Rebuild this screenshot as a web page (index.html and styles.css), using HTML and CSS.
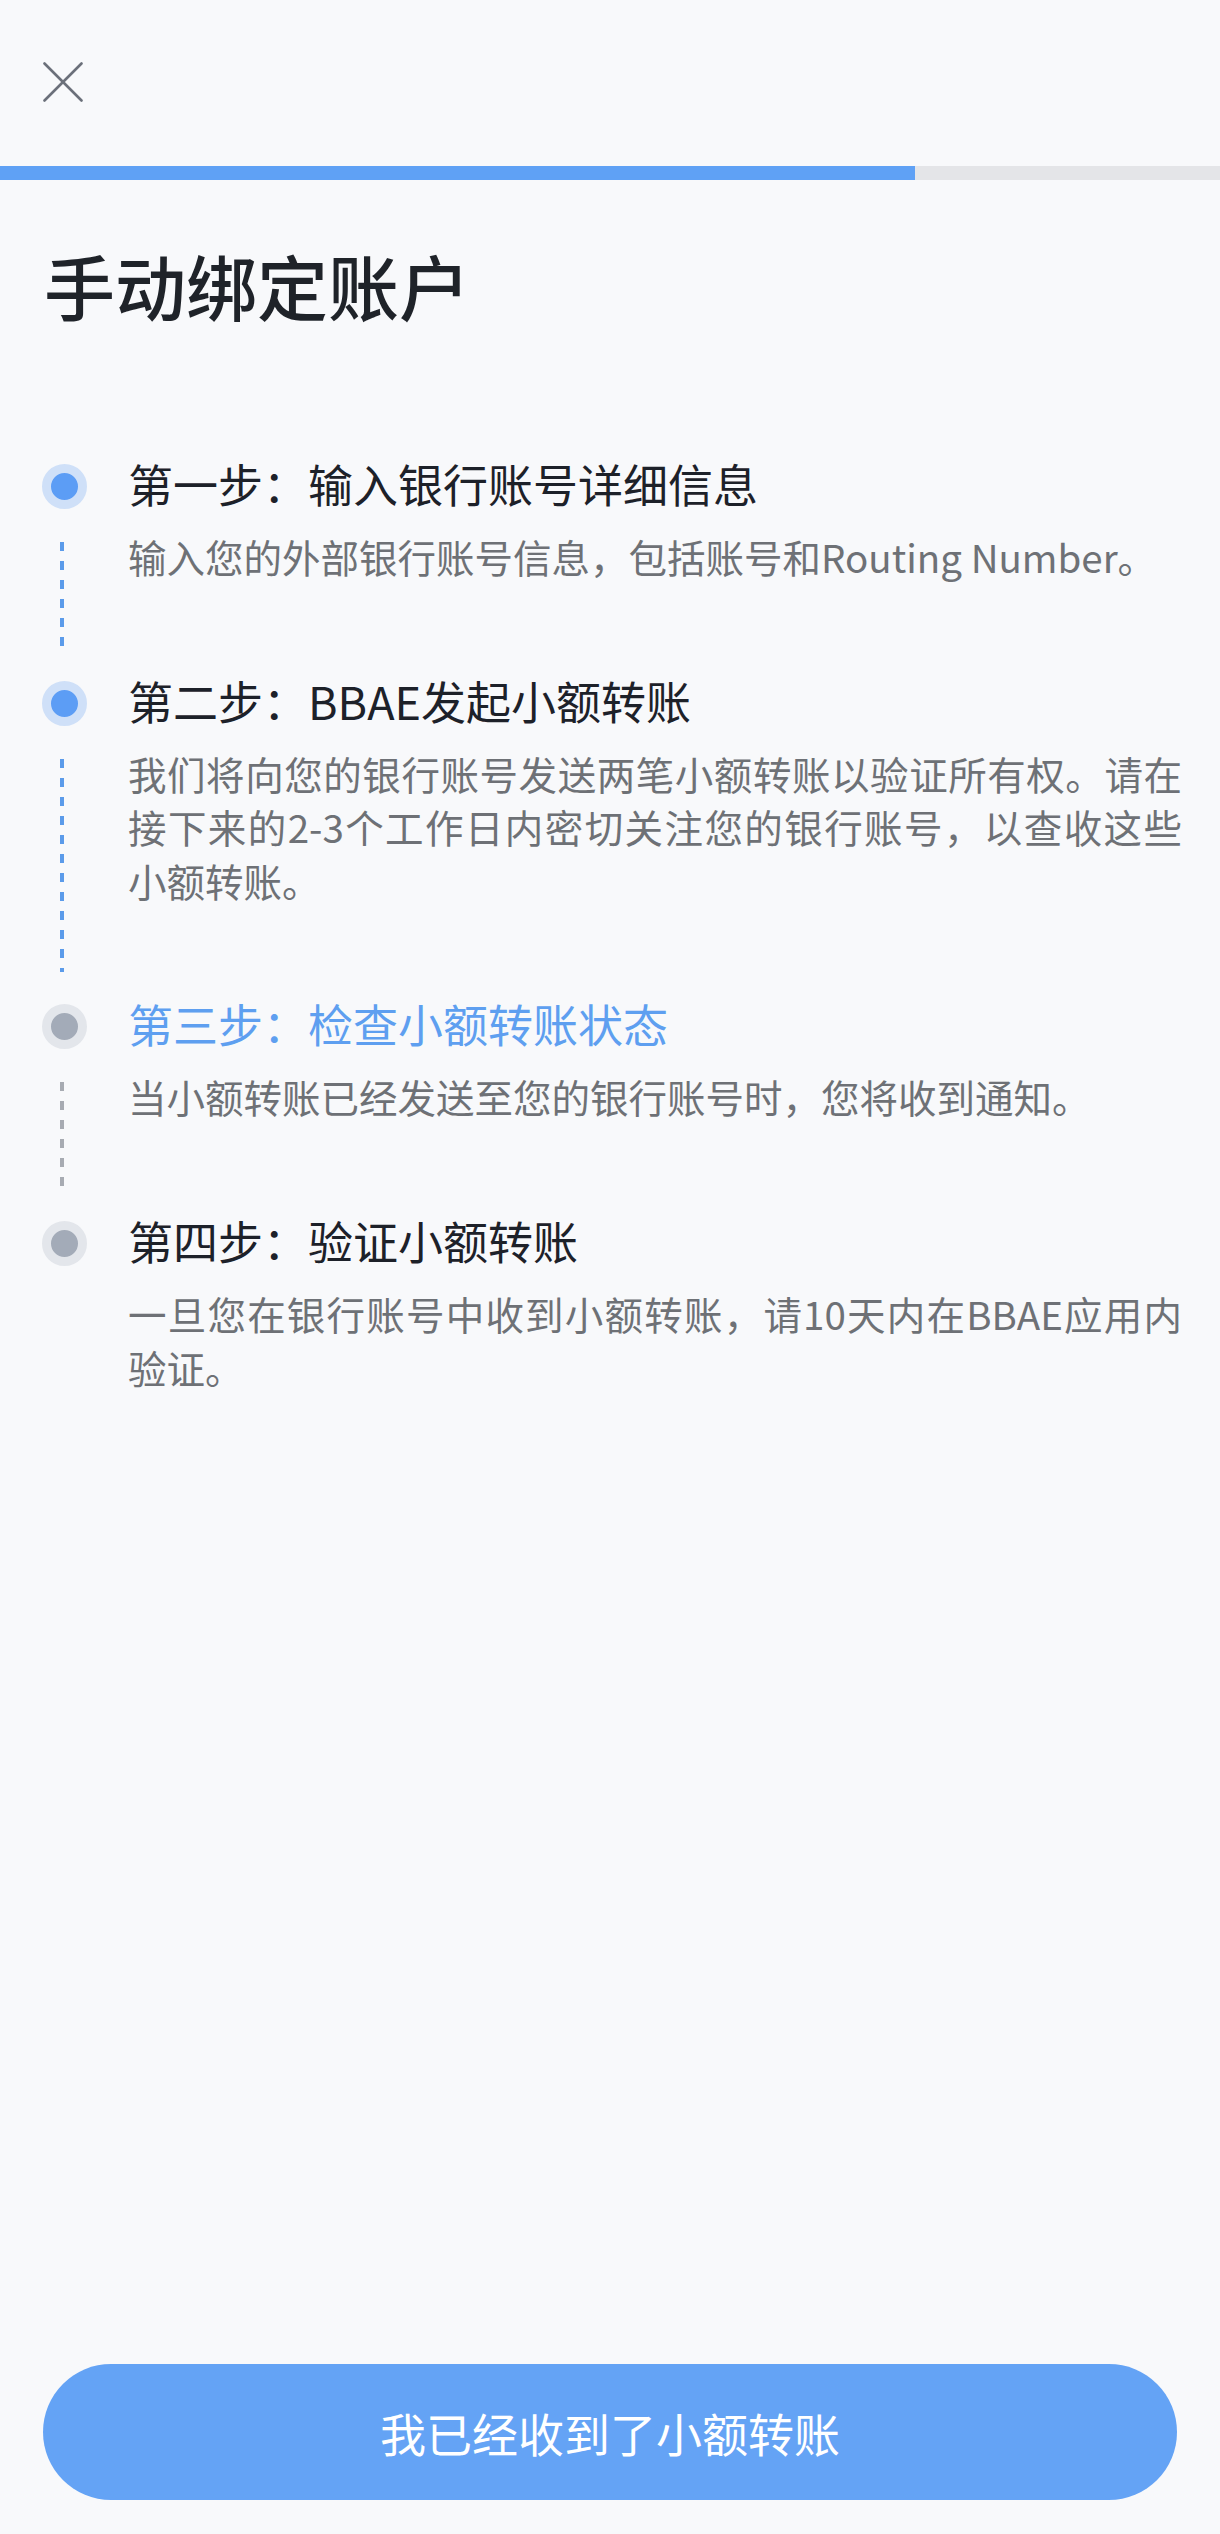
FILE: index.html
```html
<!DOCTYPE html>
<html lang="zh-CN">
<head>
    <meta charset="UTF-8">
    <meta name="viewport" content="width=device-width, initial-scale=1.0">
    <title>手动绑定账户</title>
    <link rel="stylesheet" href="styles.css">
</head>
<body>

    <div class="page">
        <div class="top-bar">
            <button class="close-button" aria-label="关闭">
                <svg width="40" height="40" viewBox="0 0 40 40">
                    <line x1="1.5" y1="1.5" x2="38.5" y2="38.5" />
                    <line x1="38.5" y1="1.5" x2="1.5" y2="38.5" />
                </svg>
            </button>
        </div>

        <div class="progress">
            <div class="progress-fill" style="width: 75%"></div>
        </div>

        <h1 class="page-title">手动绑定账户</h1>

        <div class="steps">
            <div class="step done">
                <div class="rail">
                    <div class="dot-wrap"><span class="dot"></span></div>
                    <div class="rail-line"></div>
                </div>
                <div class="step-body">
                    <div class="step-title">第一步：输入银行账号详细信息</div>
                    <p class="step-desc">输入您的外部银行账号信息，包括账号和Routing Number。</p>
                </div>
            </div>

            <div class="step done">
                <div class="rail">
                    <div class="dot-wrap"><span class="dot"></span></div>
                    <div class="rail-line"></div>
                </div>
                <div class="step-body">
                    <div class="step-title">第二步：BBAE发起小额转账</div>
                    <p class="step-desc">我们将向您的银行账号发送两笔小额转账以验证所有权。请在接下来的2-3个工作日内密切关注您的银行账号，以查收这些<span class="keep">小额转账。</span></p>
                </div>
            </div>

            <div class="step current">
                <div class="rail">
                    <div class="dot-wrap"><span class="dot"></span></div>
                    <div class="rail-line"></div>
                </div>
                <div class="step-body">
                    <div class="step-title">第三步：检查小额转账状态</div>
                    <p class="step-desc">当小额转账已经发送至您的银行账号时，您将收到通知。</p>
                </div>
            </div>

            <div class="step todo last">
                <div class="rail">
                    <div class="dot-wrap"><span class="dot"></span></div>
                </div>
                <div class="step-body">
                    <div class="step-title">第四步：验证小额转账</div>
                    <p class="step-desc">一旦您在银行账号中收到小额转账，请10天内在BBAE应用内验证。</p>
                </div>
            </div>
        </div>

        <div class="footer">
            <button class="confirm-button">我已经收到了小额转账</button>
        </div>
    </div>

</body>
</html>
```

FILE: styles.css
```css
* {
    margin: 0;
    padding: 0;
    box-sizing: border-box;
}

body {
    font-family: "Noto Sans CJK SC", "Noto Sans", sans-serif;
    background-color: #f8f9fb;
    color: #1d2129;
}

.page {
    min-height: 2534px;
    display: flex;
    flex-direction: column;
}

/* header */
.top-bar {
    height: 166px;
    padding: 62px 0 0 43px;
}

.close-button {
    width: 40px;
    height: 40px;
    border: none;
    background: none;
    cursor: pointer;
}

.close-button svg {
    display: block;
    stroke: #6b707a;
    stroke-width: 2.6;
    stroke-linecap: round;
}

.progress {
    height: 14px;
    background-color: #e4e5e8;
}

.progress-fill {
    height: 100%;
    background-color: #5fa1f5;
}

.page-title {
    margin: 62px 0 0 44px;
    font-size: 71px;
    line-height: 84px;
    font-weight: 500;
    color: #1f2329;
}

/* steps */
.steps {
    margin-top: 128px;
    padding: 0 38px 0 42px;
}

.step {
    display: flex;
    padding-bottom: 87px;
}

.step.last {
    padding-bottom: 0;
}

.rail {
    width: 86px;
    flex-shrink: 0;
    display: flex;
    flex-direction: column;
}

.dot-wrap {
    height: 60px;
    padding-top: 5px;
    display: flex;
    align-items: center;
}

.dot {
    width: 45px;
    height: 45px;
    border-radius: 50%;
    border: 9px solid #cfe0f8;
    background-color: #5c9df5;
}

.rail-line {
    flex: 1;
    width: 4px;
    margin: 28px 0 -65px 18px;
    background: repeating-linear-gradient(to bottom, #5b9bea 0, #5b9bea 9px, transparent 9px, transparent 19px);
}

.step.current .dot,
.step.todo .dot {
    border-color: #e3e6eb;
    background-color: #a3abb8;
}

.step.current .rail-line {
    background: repeating-linear-gradient(to bottom, #a7abb2 0, #a7abb2 9px, transparent 9px, transparent 19px);
}

.step-body {
    flex: 1;
}

.step-title {
    font-size: 45px;
    line-height: 60px;
    color: #1d2129;
}

.step.current .step-title {
    color: #5e9ff0;
}

.step-desc {
    margin-top: 16px;
    font-size: 38.5px;
    line-height: 53.6px;
    color: #6e7176;
    text-align: justify;
}

.keep {
    white-space: nowrap;
}

/* bottom button */
.footer {
    margin-top: auto;
    padding: 0 43px 34px;
}

.confirm-button {
    width: 100%;
    height: 136px;
    border: none;
    border-radius: 68px;
    background-color: #64a3f5;
    color: #ffffff;
    font-family: "Noto Sans CJK SC", "Noto Sans", sans-serif;
    font-size: 46px;
    cursor: pointer;
}
```
